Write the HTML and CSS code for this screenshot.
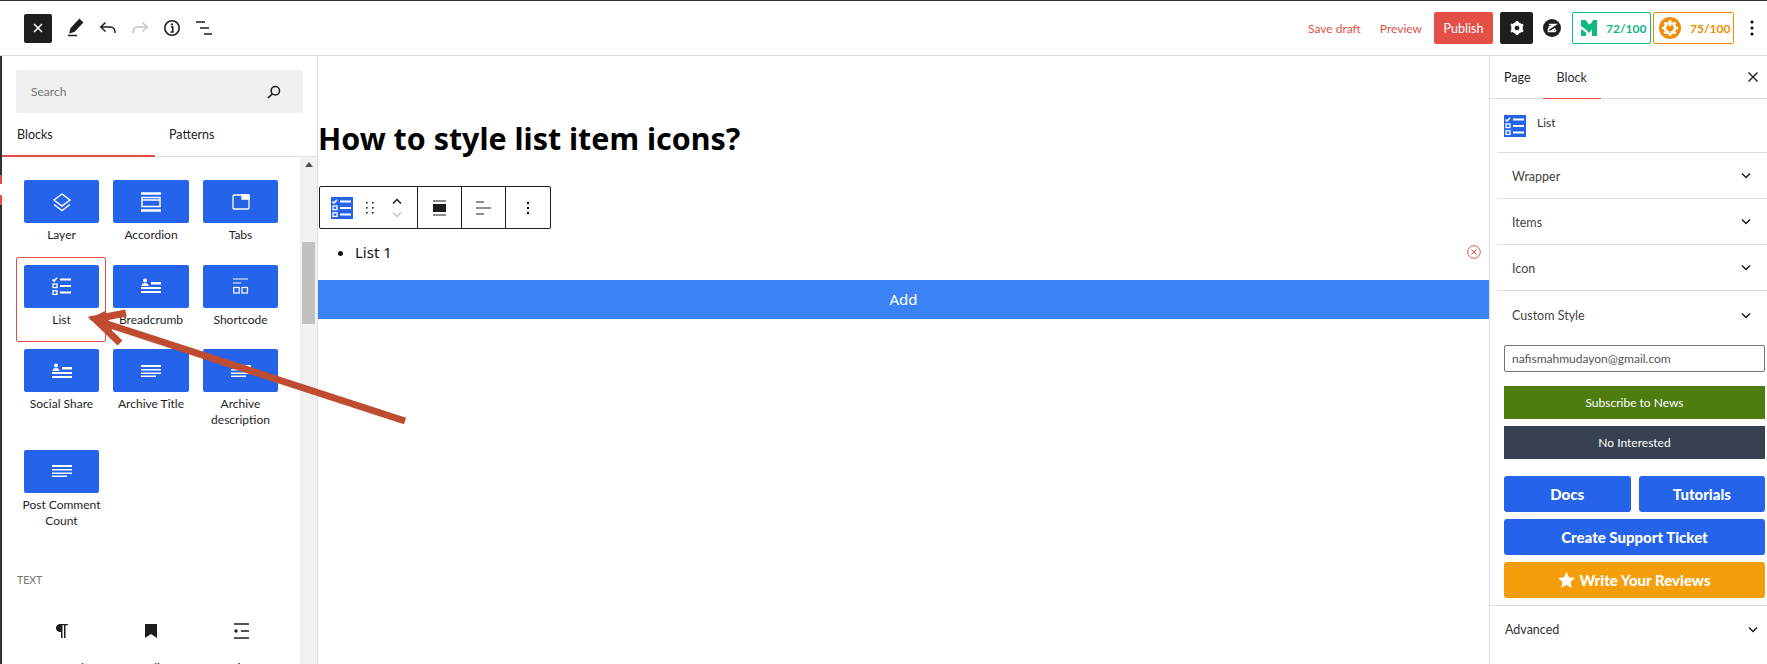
FILE: index.html
```html
<!DOCTYPE html>
<html>
<head>
	<title>How to style list item icons?</title>
	<meta charset="utf-8">
	<link rel="stylesheet" href="styles.css">
</head>
<body>
	<svg class="defs" width="0" height="0">
		<symbol id="i-list" viewBox="0 0 22 22">
			<path d="M1.500 4.500l1.500 1.500 3-3.200" fill="none" stroke="currentColor" stroke-width="1.600"/>
			<rect x="2" y="9" width="4" height="3.600" fill="none" stroke="currentColor" stroke-width="1.300"/>
			<rect x="2" y="15.800" width="4" height="3.600" fill="none" stroke="currentColor" stroke-width="1.300"/>
			<path d="M9 4.500h11M9 11h11M9 17.600h11" stroke="currentColor" stroke-width="2"/>
		</symbol>
		<symbol id="i-person" viewBox="0 0 22 16">
			<circle cx="5" cy="2.600" r="2"/>
			<path d="M1.500 8c0-4 7-4 7 0zM11 4h10v2.500H11zM1 9h20v2H1zM1 13h20v2H1z"/>
		</symbol>
		<symbol id="i-lines" viewBox="0 0 22 14">
			<path d="M1 1h20v2H1zM1 5h20v1.600H1zM1 8.400h20V10H1zM1 11.600h15v1.400H1z"/>
		</symbol>
		<symbol id="i-chev" viewBox="0 0 12 8">
			<path d="M2 1.500l4 4 4-4" fill="none" stroke="currentColor" stroke-width="1.500"/>
		</symbol>
	</svg>

	<header class="topbar">
		<div class="tools">
			<button class="close-btn">
				<svg width="12" height="12" viewBox="0 0 12 12"><path d="M2 2l8 8M10 2l-8 8" stroke="#fff" stroke-width="1.600"/></svg>
			</button>
			<svg class="tool" width="18" height="20" viewBox="0 0 18 20"><path d="M12.500 1.500l3 3L7 13.500l-4 1 1-4zM1 17.500h9" fill="#1e1e1e" stroke="#1e1e1e" stroke-width="1.300"/></svg>
			<svg class="tool" width="18" height="14" viewBox="0 0 18 14"><path d="M6.500 1.500L1.800 6l4.700 4.500M2 6h9.500c3 0 4.500 2 4.500 6" fill="none" stroke="#1e1e1e" stroke-width="1.500"/></svg>
			<svg class="tool" width="18" height="14" viewBox="0 0 18 14"><path d="M11.500 1.500L16.200 6l-4.700 4.500M16 6H6.500c-3 0-4.500 2-4.500 6" fill="none" stroke="#c4c4c4" stroke-width="1.500"/></svg>
			<svg class="tool" width="18" height="18" viewBox="0 0 18 18"><circle cx="9" cy="9" r="7.200" fill="none" stroke="#1e1e1e" stroke-width="1.600"/><path d="M8 8h1.800v5M7.500 13h3.300" fill="none" stroke="#1e1e1e" stroke-width="1.500"/><circle cx="9" cy="5.400" r="1.100" fill="#1e1e1e"/></svg>
			<svg class="tool" width="18" height="14" viewBox="0 0 18 14"><path d="M1 1h9M5 7h9M9 13h8" stroke="#1e1e1e" stroke-width="1.600"/></svg>
		</div>
		<div class="actions">
			<a class="link save">Save draft</a>
			<a class="link preview">Preview</a>
			<button class="publish">Publish</button>
			<button class="gear">
				<svg width="16" height="16" viewBox="0 0 16 16"><circle cx="8" cy="8" r="4.400" fill="none" stroke="#fff" stroke-width="3"/><path d="M8 1v14M1.900 4.500l12.200 7M1.900 11.500l12.200-7" stroke="#fff" stroke-width="2.400"/><circle cx="8" cy="8" r="2.300" fill="#1e1e1e"/></svg>
			</button>
			<svg class="zicon" width="18" height="18" viewBox="0 0 18 18"><circle cx="9" cy="9" r="9" fill="#1e1e1e"/><path d="M6 5.500h6.500L5.500 10v2.500H12l1-1.500M5.500 8.500l7-3M12.500 9.500l-5 3" fill="none" stroke="#fff" stroke-width="1.500"/></svg>
			<div class="score green">
				<svg width="16" height="16" viewBox="0 0 16 16"><path d="M0 0h4.500L8 4.500 10.500 3 12 0h4v16h-5V9.500L8 13 5 9.500 0 6zM0 9l5 3.500V16H0z" fill="#10b981"/></svg>
				<span>72/100</span>
			</div>
			<div class="score orange">
				<svg width="22" height="22" viewBox="0 0 22 22"><circle cx="11" cy="11" r="11" fill="#f28c00"/><circle cx="11" cy="11" r="6.300" fill="#fff"/><path d="M11 3v16M3 11h16M5.400 5.400l11.200 11.200M16.600 5.400L5.400 16.600" stroke="#fff" stroke-width="2.600"/><path d="M9 7.200v3M13 7.200v3M7.800 10h6.400c0 2.500-1.600 3.500-3.200 3.500S7.800 12.500 7.800 10zM11 13v3" fill="#f28c00" stroke="#f28c00" stroke-width="1.300"/></svg>
				<span>75/100</span>
			</div>
			<svg class="more" width="4" height="16" viewBox="0 0 4 16"><circle cx="2" cy="2" r="1.500"/><circle cx="2" cy="8" r="1.500"/><circle cx="2" cy="14" r="1.500"/></svg>
		</div>
	</header>

	<div class="main">
		<div class="strip"></div>
		<aside class="inserter">
			<div class="search-wrap">
				<div class="search">
					<span>Search</span>
					<svg width="14" height="14" viewBox="0 0 14 14"><circle cx="8.300" cy="5.700" r="4.200" fill="none" stroke="#1e1e1e" stroke-width="1.500"/><path d="M5.300 8.800L1 13" stroke="#1e1e1e" stroke-width="1.700"/></svg>
				</div>
			</div>
			<div class="ins-tabs">
				<div class="ins-tab active">Blocks</div>
				<div class="ins-tab">Patterns</div>
			</div>
			<div class="ins-body">
				<div class="ins-list">
					<div class="block-grid">
						<div class="block">
							<div class="tile"><svg width="20" height="20" viewBox="0 0 20 20" fill="none" stroke="#fff" stroke-width="1.400"><path d="M10 2l8 6-8 6-8-6zM2 12.500l8 6 8-6"/></svg></div>
							<p>Layer</p>
						</div>
						<div class="block">
							<div class="tile"><svg width="20" height="20" viewBox="0 0 20 20" fill="none" stroke="#fff"><path d="M0 1.500h20M0 18.500h20" stroke-width="2.500"/><rect x="1" y="5.500" width="18" height="9" stroke-width="1.500"/><path d="M1 8h18" stroke-width="1.500"/></svg></div>
							<p>Accordion</p>
						</div>
						<div class="block">
							<div class="tile"><svg width="18" height="16" viewBox="0 0 18 16" fill="none" stroke="#fff" stroke-width="1.300"><rect x="1" y="1" width="16" height="14" rx="1"/><path d="M10 1h7v4h-7z" fill="#fff"/></svg></div>
							<p>Tabs</p>
						</div>
						<div class="block">
							<div class="tile"><svg class="ic-white" width="22" height="22"><use href="#i-list"/></svg></div>
							<p>List</p>
						</div>
						<div class="block">
							<div class="tile"><svg class="ic-white" width="22" height="16"><use href="#i-person"/></svg></div>
							<p>Breadcrumb</p>
						</div>
						<div class="block">
							<div class="tile"><svg width="16" height="16" viewBox="0 0 16 16" fill="none" stroke="#fff"><path d="M0 1h15M0 5h8" stroke-width="1.200"/><rect x=".7" y="9.500" width="5.500" height="5.500" stroke-width="1.200"/><rect x="9" y="9.500" width="5.500" height="5.500" stroke-width="1.200"/></svg></div>
							<p>Shortcode</p>
						</div>
						<div class="block">
							<div class="tile"><svg class="ic-white" width="22" height="16"><use href="#i-person"/></svg></div>
							<p>Social Share</p>
						</div>
						<div class="block">
							<div class="tile"><svg class="ic-white" width="22" height="14"><use href="#i-lines"/></svg></div>
							<p>Archive Title</p>
						</div>
						<div class="block">
							<div class="tile"><svg class="ic-white" width="22" height="14"><use href="#i-lines"/></svg></div>
							<p>Archive description</p>
						</div>
						<div class="block">
							<div class="tile"><svg class="ic-white" width="22" height="14"><use href="#i-lines"/></svg></div>
							<p>Post Comment Count</p>
						</div>
					</div>
					<h4 class="cat">TEXT</h4>
					<div class="block-grid plain">
						<div class="block">
							<div class="tile"><svg width="14" height="16" viewBox="0 0 14 16"><path d="M6 1C2.500 1 1 3 1 5s1.500 4 5 4v6h1.500V2.200H9V15h1.500V2.200H13V1z" fill="#1e1e1e"/></svg></div>
							<p>Paragraph</p>
						</div>
						<div class="block">
							<div class="tile"><svg width="12" height="14" viewBox="0 0 12 14"><path d="M0 0h12v14L6 10l-6 4z" fill="#1e1e1e"/></svg></div>
							<p>Heading</p>
						</div>
						<div class="block">
							<div class="tile"><svg width="16" height="16" viewBox="0 0 16 16"><path d="M1 1h15M8 8h8M1 15h15" stroke="#1e1e1e" stroke-width="1.300"/><circle cx="3" cy="8" r="1.700" fill="#1e1e1e"/></svg></div>
							<p>List</p>
						</div>
					</div>
				</div>
				<div class="scrollbar">
					<div class="arrow"></div>
					<div class="thumb"></div>
				</div>
			</div>
		</aside>

		<main class="canvas">
			<h1>How to style list item icons?</h1>
			<div class="block-toolbar">
				<div class="tb-sec first">
					<svg class="ic-box" width="22" height="22"><use href="#i-list"/></svg>
					<svg class="drag" width="8" height="12" viewBox="0 0 8 12"><g fill="#1e1e1e"><rect width="1.600" height="1.600"/><rect x="6" width="1.600" height="1.600"/><rect y="5" width="1.600" height="1.600"/><rect x="6" y="5" width="1.600" height="1.600"/><rect y="10" width="1.600" height="1.600"/><rect x="6" y="10" width="1.600" height="1.600"/></g></svg>
					<div class="movers">
						<svg width="12" height="8"><use href="#i-chev" transform="rotate(180 6 4)"/></svg>
						<svg class="off" width="12" height="8"><use href="#i-chev"/></svg>
					</div>
				</div>
				<div class="tb-sec">
					<svg width="14" height="16" viewBox="0 0 14 16"><path d="M0 1h13M0 15h13" stroke="#1e1e1e" stroke-width="1.200"/><rect y="4" width="13" height="8" fill="#1e1e1e"/></svg>
				</div>
				<div class="tb-sec">
					<svg width="16" height="14" viewBox="0 0 16 14"><path d="M0 1h8M0 7h15M0 13h8" stroke="#1e1e1e" stroke-width="1.200"/></svg>
				</div>
				<div class="tb-sec last">
					<svg width="4" height="14" viewBox="0 0 4 14"><circle cx="2" cy="2" r="1.200"/><circle cx="2" cy="7" r="1.200"/><circle cx="2" cy="12" r="1.200"/></svg>
				</div>
			</div>
			<div class="list-row">
				<ul><li>List 1</li></ul>
				<svg width="14" height="14" viewBox="0 0 14 14" fill="none" stroke="#e34f45"><circle cx="7" cy="7" r="6.300"/><path d="M4.500 4.500l5 5M9.500 4.500l-5 5"/></svg>
			</div>
			<div class="add-bar">Add</div>
		</main>

		<aside class="sidebar">
			<div class="side-tabs">
				<div class="side-tab">Page</div>
				<div class="side-tab active">Block</div>
				<svg class="side-close" width="12" height="12" viewBox="0 0 12 12"><path d="M1.500 1.500l9 9M10.500 1.500l-9 9" stroke="#1e1e1e" stroke-width="1.400"/></svg>
			</div>
			<div class="block-card">
				<svg class="ic-box" width="22" height="22"><use href="#i-list"/></svg>
				<span>List</span>
			</div>
			<div class="panel-row"><span>Wrapper</span><svg width="12" height="8"><use href="#i-chev"/></svg></div>
			<div class="panel-row"><span>Items</span><svg width="12" height="8"><use href="#i-chev"/></svg></div>
			<div class="panel-row"><span>Icon</span><svg width="12" height="8"><use href="#i-chev"/></svg></div>
			<div class="panel-row open"><span>Custom Style</span><svg width="12" height="8"><use href="#i-chev"/></svg></div>
			<div class="custom">
				<div class="email">nafismahmudayon@gmail.com</div>
				<button class="sq olive">Subscribe to News</button>
				<button class="sq slate">No Interested</button>
				<div class="pair">
					<button class="big blue">Docs</button>
					<button class="big blue">Tutorials</button>
				</div>
				<button class="big blue">Create Support Ticket</button>
				<button class="big amber">
					<svg width="17" height="16" viewBox="0 0 17 16"><path d="M8.500 0l2.500 5.300 5.800.7-4.300 4 1.200 5.800-5.200-2.900-5.200 2.900 1.200-5.800L.2 6 6 5.300z" fill="#fff"/></svg>
					Write Your Reviews
				</button>
			</div>
			<div class="advanced"><span>Advanced</span><svg width="12" height="8"><use href="#i-chev"/></svg></div>
		</aside>
	</div>

	<div class="select-box"></div>
	<svg class="pointer" width="420" height="130" viewBox="0 0 420 130">
		<path d="M405 122L98 22" fill="none" stroke="#bf4b30" stroke-width="7"/>
		<path d="M126 14L95 20l25 24" fill="none" stroke="#bf4b30" stroke-width="7"/>
		<path d="M89 20l16-8 8 22z" fill="#bf4b30"/>
	</svg>
</body>
</html>
```
FILE: styles.css
```css
*{
	margin: 0;
	padding: 0;
	box-sizing: border-box;
}
:root{
	--blue: #2563eb;
	--red: #e34f45;
	--line: #e0e0e0;
	--ink: #1e1e1e;
}
html, body{
	height: 664px;
	overflow: hidden;
}
body{
	position: relative;
	background: #fff;
	color: var(--ink);
	font-family: Lato, "Noto Sans", sans-serif;
	font-size: 12px;
	border-top: 1px solid #2c3338;
}
button{
	border: none;
	font-family: inherit;
	color: #fff;
}
.defs{
	position: absolute;
}

/* top bar */
.topbar{
	height: 55px;
	display: flex;
	align-items: center;
	justify-content: space-between;
	border-bottom: 1px solid var(--line);
	padding-left: 24px;
}
.tools{
	display: flex;
	align-items: center;
}
.close-btn{
	width: 28px;
	height: 29px;
	background: var(--ink);
	border-radius: 2px;
	display: flex;
	align-items: center;
	justify-content: center;
	margin-right: 15px;
}
.tool{
	margin-right: 14px;
}
.actions{
	display: flex;
	align-items: center;
	height: 32px;
}
.link{
	color: var(--red);
	font-size: 12px;
}
.save{
	margin-right: 19px;
}
.preview{
	margin-right: 12px;
}
.publish{
	width: 59px;
	height: 32px;
	background: var(--red);
	border-radius: 2px;
	font-size: 12.500px;
	margin-right: 7px;
}
.gear{
	width: 33px;
	height: 32px;
	background: var(--ink);
	border-radius: 2px;
	display: flex;
	align-items: center;
	justify-content: center;
	margin-right: 10px;
}
.zicon{
	margin-right: 11px;
}
.score{
	height: 32px;
	display: flex;
	align-items: center;
	border: 1px solid;
	border-radius: 2px;
	font-weight: 700;
	font-size: 12px;
}
.green{
	width: 79px;
	color: #10b981;
	border-color: #10b981;
	padding-left: 8px;
	gap: 9px;
	margin-right: 2px;
}
.orange{
	width: 81px;
	color: #f28c00;
	border-color: #f28c00;
	padding-left: 5px;
	gap: 9px;
	margin-right: 16px;
}
.more{
	margin-right: 13px;
}

/* main columns */
.main{
	display: flex;
	height: 608px;
}
.strip{
	width: 2px;
	background: linear-gradient(#2c3338 119px, var(--red) 119px, var(--red) 128px, #fff 128px, #fff 139px, var(--red) 139px, var(--red) 149px, #2c3338 149px);
}
.inserter{
	width: 316px;
	border-right: 1px solid var(--line);
	display: flex;
	flex-direction: column;
}
.search-wrap{
	padding: 14px 14px 0;
}
.search{
	height: 43px;
	background: #f0f0f0;
	border-radius: 2px;
	display: flex;
	align-items: center;
	justify-content: space-between;
	padding: 0 22px 0 15px;
	color: #757575;
}
.ins-tabs{
	display: flex;
	height: 44px;
	border-bottom: 1px solid var(--line);
}
.ins-tab{
	width: 153px;
	padding: 14px 0 0 15px;
	font-size: 12.500px;
	margin-bottom: -1px;
}
.ins-tab.active{
	border-bottom: 2px solid var(--red);
}
.ins-tab + .ins-tab{
	padding-left: 14px;
}
.ins-body{
	flex: 1;
	display: flex;
	min-height: 0;
}
.ins-list{
	flex: 1;
	overflow: hidden;
	padding: 23px 20px 0 22px;
}
.block-grid{
	display: grid;
	grid-template-columns: 75px 76px 75px;
	column-gap: 14px;
	row-gap: 21.500px;
}
.block p{
	text-align: center;
	line-height: 16px;
	margin: 4px -4px 0;
}
.tile{
	height: 43px;
	background: var(--blue);
	border-radius: 2px;
	display: flex;
	align-items: center;
	justify-content: center;
}
.plain .tile{
	background: none;
}
.ic-white{
	color: #fff;
	fill: #fff;
}
.cat{
	font-size: 10.500px;
	font-weight: 400;
	color: #757575;
	margin: 45px 0 23px -7px;
	line-height: 13px;
}
.plain .block p{
	margin-top: 7px;
}
.scrollbar{
	width: 17px;
	background: #f1f1f1;
	position: relative;
}
.arrow{
	width: 0;
	margin: 5px auto 0;
	border: 4px solid transparent;
	border-top: none;
	border-bottom: 5px solid #505050;
}
.thumb{
	height: 82px;
	margin: 75px 2px 0;
	background: #c1c1c1;
}

/* editor canvas */
.canvas{
	flex: 1;
	min-width: 0;
	font-family: "Noto Sans", sans-serif;
}
h1{
	font-size: 30.400px;
	line-height: 44px;
	color: #000;
	margin: 61px 0 25px 0;
}
.block-toolbar{
	display: inline-flex;
	height: 43px;
	margin-left: 1px;
	border: 1px solid var(--ink);
	border-radius: 2px;
	background: #fff;
	vertical-align: top;
}
.tb-sec{
	width: 44px;
	display: flex;
	align-items: center;
	justify-content: center;
	border-right: 1px solid var(--ink);
}
.tb-sec.first{
	width: 98px;
	justify-content: flex-start;
	padding-left: 11px;
	gap: 13px;
}
.tb-sec.last{
	width: 44px;
	border-right: none;
}
.drag{
	margin-right: 1px;
}
.ic-box{
	background: var(--blue);
	color: #fff;
	flex: none;
}
.movers{
	display: flex;
	flex-direction: column;
	gap: 6px;
	margin-left: 3px;
}
.movers svg{
	display: block;
}
.off{
	color: #c4c4c4;
}
.list-row{
	display: flex;
	align-items: center;
	justify-content: space-between;
	height: 51px;
	padding: 0 8px 5px 0;
	font-size: 15px;
	color: #111;
}
.list-row ul{
	padding-left: 37px;
}
.add-bar{
	height: 39px;
	padding-bottom: 1px;
	background: #3b82f6;
	color: #fff;
	font-size: 15px;
	display: flex;
	align-items: center;
	justify-content: center;
}

/* right sidebar */
.sidebar{
	width: 278px;
	border-left: 1px solid var(--line);
	font-size: 12.500px;
	color: #333;
}
.side-tabs{
	height: 43px;
	display: flex;
	align-items: center;
	border-bottom: 1px solid var(--line);
	position: relative;
	padding-left: 14px;
}
.side-tab{
	color: var(--ink);
	margin-right: 26px;
}
.side-tab.active{
	position: relative;
	color: #333;
}
.side-tab.active::after{
	content: "";
	position: absolute;
	left: -14px;
	right: -14px;
	top: 28px;
	height: 1px;
	background: var(--red);
}
.side-close{
	margin-left: auto;
	margin-right: 8px;
}
.block-card{
	height: 54px;
	margin-left: 7px;
	display: flex;
	align-items: flex-start;
	gap: 11px;
	padding: 16px 0 0 7px;
	border-bottom: 1px solid var(--line);
	font-size: 12px;
}
.block-card span{
	line-height: 16px;
}
.panel-row{
	height: 46px;
	margin-left: 7px;
	padding: 1px 15px 0;
	display: flex;
	align-items: center;
	justify-content: space-between;
	border-bottom: 1px solid var(--line);
	color: #444;
}
.panel-row svg, .advanced svg{
	color: var(--ink);
}
.panel-row.open{
	border-bottom: none;
	height: 48px;
}
.custom{
	padding: 6px 2px 7px 14px;
	border-bottom: 1px solid var(--line);
}
.email{
	height: 27px;
	border: 1px solid #757575;
	border-radius: 2px;
	padding-left: 7px;
	line-height: 25px;
	color: #555;
	font-size: 12px;
	margin-bottom: 14px;
}
.sq{
	display: block;
	width: 100%;
	height: 33px;
	font-size: 12px;
	margin-bottom: 7px;
}
.olive{
	background: #4d7c0f;
}
.slate{
	background: #374151;
	margin-bottom: 17px;
}
.big{
	width: 100%;
	height: 36px;
	border-radius: 3px;
	font-size: 15px;
	font-weight: 900;
	display: flex;
	align-items: center;
	justify-content: center;
	gap: 4px;
}
.blue{
	background: var(--blue);
	margin-bottom: 7px;
}
.amber{
	background: #f59e0b;
}
.pair{
	display: flex;
	gap: 8px;
}
.advanced{
	height: 47px;
	display: flex;
	align-items: center;
	justify-content: space-between;
	padding: 0 8px 0 15px;
}

/* annotations on top of the screenshot */
.select-box{
	position: absolute;
	left: 16px;
	top: 256px;
	width: 90px;
	height: 85px;
	border: 1.500px solid var(--red);
	border-radius: 2px;
}
.pointer{
	position: absolute;
	left: 0;
	top: 298px;
}
```
